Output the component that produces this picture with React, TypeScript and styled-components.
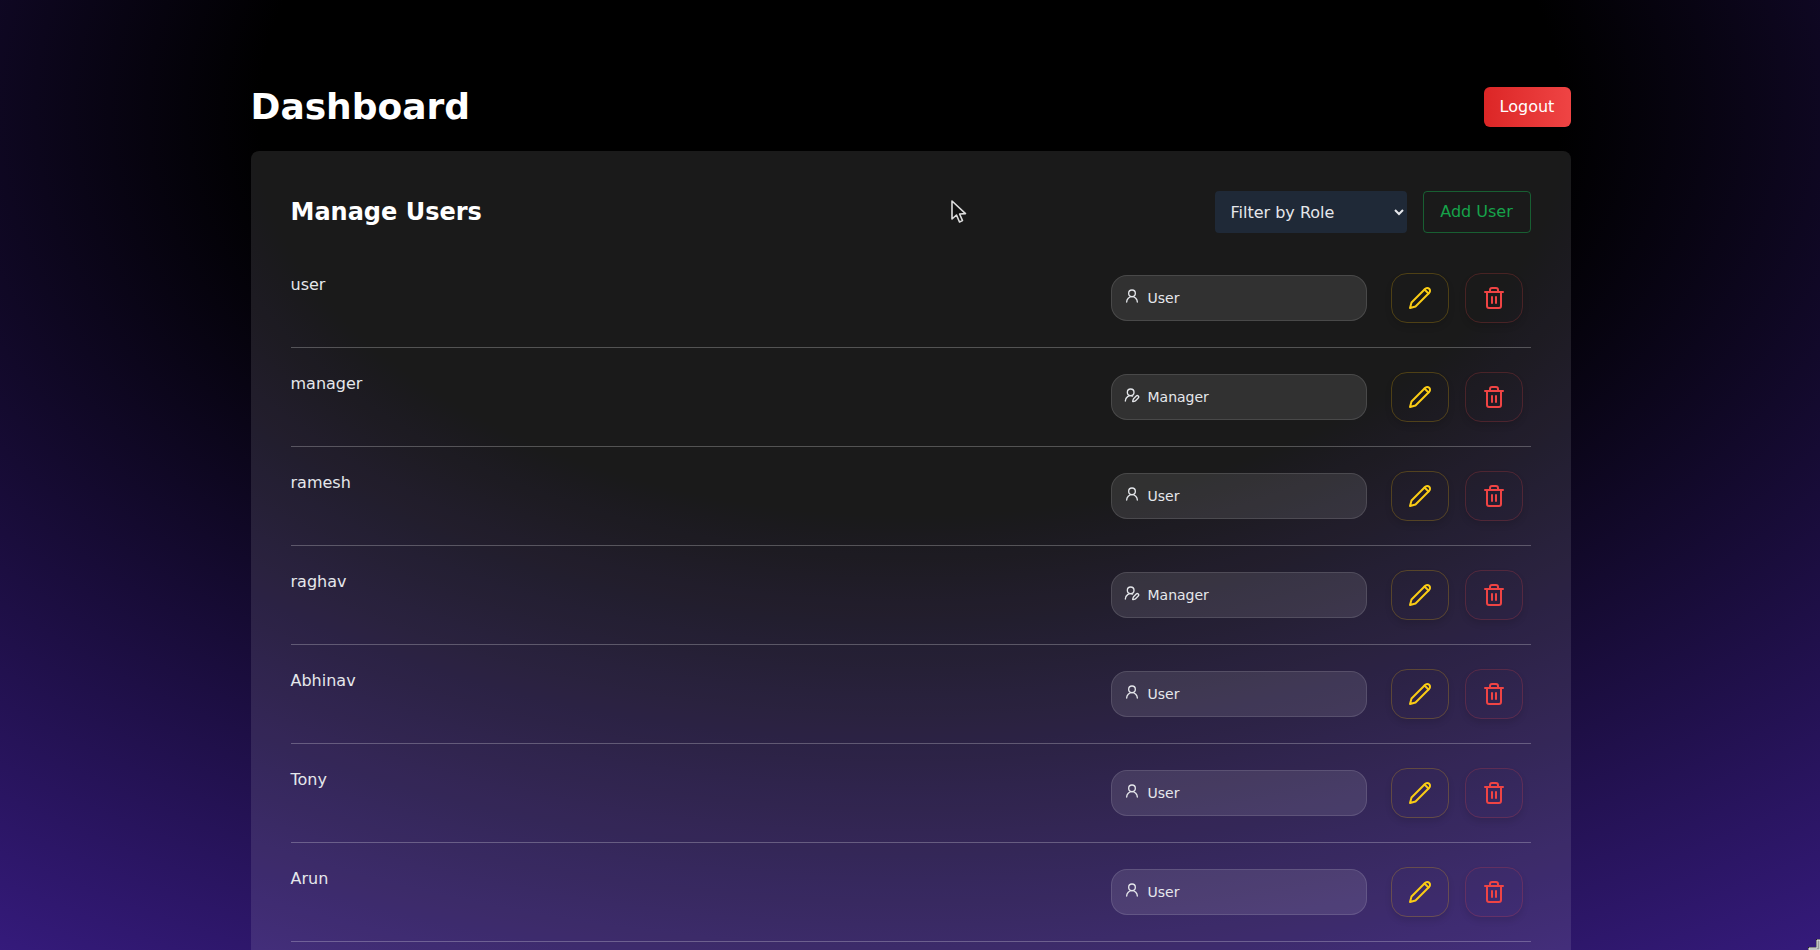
import React from 'react'
import styled, { createGlobalStyle } from 'styled-components'
import { Trash2, UserRound, UserRoundPen } from 'lucide-react'

const GlobalStyle = createGlobalStyle`
  * {
    box-sizing: border-box;
  }

  html, body {
    margin: 0;
    height: 950px;
    overflow: hidden;
    background: #000;
    font-family: "DejaVu Sans", sans-serif;
  }
`;

const Page = styled.div`
  height: 950px;
  overflow: hidden;
  background: radial-gradient(2560px 1576px at 50% 110px, #000 25.4%, #63e 100%);
`;

const Container = styled.div`
  width: 1320px;
  margin-left: 250.5px;
  padding-top: 87px;
`;

const TopBar = styled.header`
  display: flex;
  justify-content: space-between;
  align-items: center;
  margin-bottom: 24px;
`;

const Heading = styled.h1`
  margin: 0;
  font-size: 36px;
  line-height: 40px;
  font-weight: 700;
  color: #fff;
`;

const LogoutButton = styled.button`
  width: 87px;
  height: 40px;
  padding: 0 0 2px;
  border: none;
  border-radius: 6px;
  background: linear-gradient(to right, #dc2626, #ef4444);
  color: #fff;
  font: 400 16px "DejaVu Sans", sans-serif;
`;

const Card = styled.section`
  background: rgba(255, 255, 255, 0.1);
  border-radius: 8px;
  padding: 40px;
`;

const CardHead = styled.div`
  display: flex;
  justify-content: space-between;
  align-items: center;
  margin-bottom: 40px;
`;

const CardTitle = styled.h2`
  margin: 0;
  font-size: 24px;
  line-height: 32px;
  font-weight: 700;
  color: #fff;
`;

const Controls = styled.div`
  display: flex;
  gap: 16px;
`;

const RoleFilter = styled.select`
  width: 192px;
  height: 42px;
  padding: 0 12px;
  border: none;
  border-radius: 4px;
  background: #1f2937;
  color: #e5e7eb;
  font: 400 16px "DejaVu Sans", sans-serif;
`;

const AddButton = styled.button`
  width: 108px;
  height: 42px;
  padding: 0 0 2px;
  border: 1px solid rgba(22, 163, 74, 0.5);
  border-radius: 4px;
  background: transparent;
  color: #16a34a;
  font: 400 16px "DejaVu Sans", sans-serif;
`;

const UserList = styled.div`
  display: flex;
  flex-direction: column;
  gap: 24px;
`;

const Row = styled.div`
  display: flex;
  justify-content: space-between;
  align-items: flex-start;
  padding-bottom: 24px;
  border-bottom: 1px solid rgba(255, 255, 255, 0.25);
`;

const Name = styled.span`
  font-size: 16px;
  line-height: 24px;
  color: #e5e7eb;
`;

const RowActions = styled.div`
  display: flex;
  align-items: flex-start;
  margin-right: 8px;
`;

const RolePill = styled.div`
  display: flex;
  align-items: center;
  gap: 8px;
  width: 256px;
  height: 46px;
  margin: 2px 24px 0 0;
  padding: 0 12px;
  border: 1px solid rgba(255, 255, 255, 0.12);
  border-radius: 16px;
  background: rgba(255, 255, 255, 0.1);
  color: #e5e7eb;
  font-size: 14px;

  svg {
    margin-top: -4px;
  }
`;

const IconButton = styled.button<{ $tone: string; $edge: string }>`
  display: flex;
  align-items: center;
  justify-content: center;
  width: 58px;
  height: 50px;
  padding: 0;
  border: 1px solid ${({ $edge }) => $edge};
  border-radius: 16px;
  background: transparent;
  box-shadow: 0 4px 6px rgba(0, 0, 0, 0.1);
  color: ${({ $tone }) => $tone};

  & + & {
    margin-left: 16px;
  }
`;

const MouseCursor = styled.svg`
  position: absolute;
  left: 950px;
  top: 199px;
`;

const CornerCursor = styled.svg`
  position: absolute;
  right: 0;
  bottom: 0;
`;

const PencilIcon = () => (
  <svg width="24" height="24" viewBox="0 0 24 24" fill="none" stroke="currentColor" strokeWidth="2" strokeLinecap="round" strokeLinejoin="round">
    <path d="M17 3a2.85 2.83 0 1 1 4 4L7.5 20.5 2 22l1.5-5.5Z" />
    <path d="m16.5 3.5 4 4" />
  </svg>
);

const users = [
  { name: 'user', role: 'User' },
  { name: 'manager', role: 'Manager' },
  { name: 'ramesh', role: 'User' },
  { name: 'raghav', role: 'Manager' },
  { name: 'Abhinav', role: 'User' },
  { name: 'Tony', role: 'User' },
  { name: 'Arun', role: 'User' },
];

export default function App() {
  return (
    <Page>
      <GlobalStyle />
      <Container>
        <TopBar>
          <Heading>Dashboard</Heading>
          <LogoutButton>Logout</LogoutButton>
        </TopBar>
        <Card>
          <CardHead>
            <CardTitle>Manage Users</CardTitle>
            <Controls>
              <RoleFilter defaultValue="">
                <option value="">Filter by Role</option>
                <option value="User">User</option>
                <option value="Manager">Manager</option>
              </RoleFilter>
              <AddButton>Add User</AddButton>
            </Controls>
          </CardHead>
          <UserList>
            {users.map((user) => (
              <Row key={user.name}>
                <Name>{user.name}</Name>
                <RowActions>
                  <RolePill>
                    {user.role === 'Manager' ? <UserRoundPen size={16} /> : <UserRound size={16} />}
                    {user.role}
                  </RolePill>
                  <IconButton $tone="#facc15" $edge="rgba(234, 179, 8, 0.25)">
                    <PencilIcon />
                  </IconButton>
                  <IconButton $tone="#ef4444" $edge="rgba(239, 68, 68, 0.22)">
                    <Trash2 size={24} />
                  </IconButton>
                </RowActions>
              </Row>
            ))}
          </UserList>
        </Card>
      </Container>
      <MouseCursor width="18" height="26" viewBox="0 0 18 26">
        <path d="M2 2 L2 20 L6.5 16 L9.5 23 L12.5 21.6 L9.6 15 L15.5 14.6 Z" fill="#111" stroke="#ddd" strokeWidth="1.6" strokeLinejoin="round" />
      </MouseCursor>
      <CornerCursor width="12" height="12" viewBox="0 0 12 12">
        <path d="M0 12 V9 H8 V1 H12 V12 Z" fill="#222" />
        <path d="M1 12 V10 H9 V2 H12 V12 Z" fill="#999" stroke="#eee" strokeWidth="1" />
      </CornerCursor>
    </Page>
  )
}
